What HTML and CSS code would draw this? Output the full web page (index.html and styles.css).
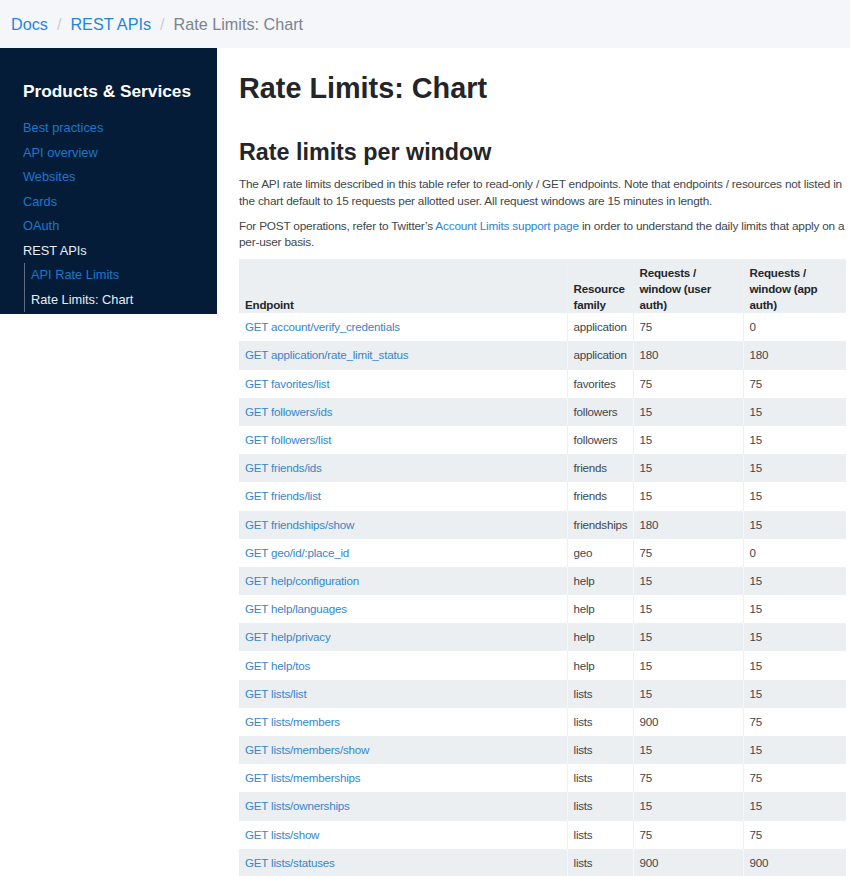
FILE: index.html
```html
<!DOCTYPE html>
<html>
<head>
<meta charset="utf-8">
<link rel="stylesheet" href="styles.css">
</head>
<body>
<nav class="crumbs">
  <a href="#">Docs</a><span class="sep">/</span><a href="#">REST APIs</a><span class="sep">/</span><span class="current">Rate Limits: Chart</span>
</nav>
<div class="layout">
  <aside class="sidebar">
    <h3 class="side-title">Products &amp; Services</h3>
    <ul class="side-list">
      <li><a href="#">Best practices</a></li>
      <li><a href="#">API overview</a></li>
      <li><a href="#">Websites</a></li>
      <li><a href="#">Cards</a></li>
      <li><a href="#">OAuth</a></li>
      <li class="active">REST APIs</li>
    </ul>
    <ul class="side-sub">
      <li><a href="#">API Rate Limits</a></li>
      <li class="active">Rate Limits: Chart</li>
    </ul>
  </aside>
  <main class="main">
    <h1 class="title">Rate Limits: Chart</h1>
    <h2 class="subtitle">Rate limits per window</h2>
    <p class="text">The API rate limits described in this table refer to read-only / GET endpoints. Note that endpoints / resources not listed in the chart default to 15 requests per allotted user. All request windows are 15 minutes in length.</p>
    <p class="text">For POST operations, refer to Twitter’s <a href="#">Account Limits support page</a> in order to understand the daily limits that apply on a per-user basis.</p>
    <table class="limits">
      <colgroup>
        <col class="c1"><col class="c2"><col class="c3"><col class="c4">
      </colgroup>
      <thead>
        <tr><th>Endpoint</th><th>Resource family</th><th>Requests / window (user auth)</th><th>Requests / window (app auth)</th></tr>
      </thead>
      <tbody>
        <tr><td><a href="#">GET account/verify_credentials</a></td><td>application</td><td>75</td><td>0</td></tr>
        <tr><td><a href="#">GET application/rate_limit_status</a></td><td>application</td><td>180</td><td>180</td></tr>
        <tr><td><a href="#">GET favorites/list</a></td><td>favorites</td><td>75</td><td>75</td></tr>
        <tr><td><a href="#">GET followers/ids</a></td><td>followers</td><td>15</td><td>15</td></tr>
        <tr><td><a href="#">GET followers/list</a></td><td>followers</td><td>15</td><td>15</td></tr>
        <tr><td><a href="#">GET friends/ids</a></td><td>friends</td><td>15</td><td>15</td></tr>
        <tr><td><a href="#">GET friends/list</a></td><td>friends</td><td>15</td><td>15</td></tr>
        <tr><td><a href="#">GET friendships/show</a></td><td>friendships</td><td>180</td><td>15</td></tr>
        <tr><td><a href="#">GET geo/id/:place_id</a></td><td>geo</td><td>75</td><td>0</td></tr>
        <tr><td><a href="#">GET help/configuration</a></td><td>help</td><td>15</td><td>15</td></tr>
        <tr><td><a href="#">GET help/languages</a></td><td>help</td><td>15</td><td>15</td></tr>
        <tr><td><a href="#">GET help/privacy</a></td><td>help</td><td>15</td><td>15</td></tr>
        <tr><td><a href="#">GET help/tos</a></td><td>help</td><td>15</td><td>15</td></tr>
        <tr><td><a href="#">GET lists/list</a></td><td>lists</td><td>15</td><td>15</td></tr>
        <tr><td><a href="#">GET lists/members</a></td><td>lists</td><td>900</td><td>75</td></tr>
        <tr><td><a href="#">GET lists/members/show</a></td><td>lists</td><td>15</td><td>15</td></tr>
        <tr><td><a href="#">GET lists/memberships</a></td><td>lists</td><td>75</td><td>75</td></tr>
        <tr><td><a href="#">GET lists/ownerships</a></td><td>lists</td><td>15</td><td>15</td></tr>
        <tr><td><a href="#">GET lists/show</a></td><td>lists</td><td>75</td><td>75</td></tr>
        <tr><td><a href="#">GET lists/statuses</a></td><td>lists</td><td>900</td><td>900</td></tr>
        <tr><td><a href="#">GET lists/subscribers</a></td><td>lists</td><td>180</td><td>15</td></tr>
      </tbody>
    </table>
  </main>
</div>
</body>
</html>
```
FILE: styles.css
```css
html, body {
  margin: 0;
  padding: 0;
  background: #ffffff;
  font-family: "Liberation Sans", Arial, Helvetica, sans-serif;
  color: #333a40;
}
a { text-decoration: none; }

.crumbs {
  height: 48px;
  box-sizing: border-box;
  padding: 0 11px;
  display: flex;
  align-items: center;
  background: #f4f6f9;
  font-size: 16.2px;
}
.crumbs a { color: #1f86d8; }
.crumbs .sep { color: #c9ced3; margin: 0 9px; }
.crumbs .current { color: #7b848c; }

.layout {
  display: flex;
  align-items: flex-start;
}

.sidebar {
  width: 217px;
  flex: none;
  box-sizing: border-box;
  background: #051c38;
  padding: 32px 0 2px 23px;
  color: #ffffff;
}
.side-title {
  margin: 0 0 14px;
  font-size: 17.3px;
  font-weight: bold;
  line-height: 22px;
  color: #ffffff;
}
.side-list, .side-sub {
  list-style: none;
  margin: 0;
  padding: 0;
  font-size: 12.8px;
}
.side-list li, .side-sub li {
  line-height: 24.5px;
}
.side-list a, .side-sub a { color: #1c78cc; }
.side-list .active, .side-sub .active { color: #e8edf2; }
.side-sub {
  margin-left: 1px;
  padding-left: 6px;
  border-left: 1px solid #5f6f82;
}

.main {
  flex: 1;
  min-width: 0;
  padding: 0 4px 0 22px;
}
.title {
  margin: 20px 0 0;
  font-size: 28.8px;
  line-height: 40px;
  font-weight: bold;
  color: #222529;
}
.subtitle {
  margin: 29px 0 0;
  font-size: 23.3px;
  line-height: 30px;
  font-weight: bold;
  color: #222529;
}
.text {
  margin: 9px 0 0;
  font-size: 11.8px;
  letter-spacing: -0.2px;
  line-height: 16.8px;
  color: #40464c;
}
.text + .text { margin-top: 8px; }
.text a { color: #2b86d0; }

.limits {
  width: 100%;
  margin-top: 8px;
  border-collapse: collapse;
  table-layout: fixed;
  font-size: 11.6px;
  letter-spacing: -0.2px;
  color: #40464c;
}
.limits .c1 { width: 328px; }
.limits .c2 { width: 66px; }
.limits .c3 { width: 110px; }
.limits .c4 { width: auto; }
.limits th {
  text-align: left;
  vertical-align: bottom;
  font-weight: bold;
  color: #22262a;
  line-height: 16px;
  padding: 6px 6px 0;
  background: #eceff2;
}
.limits td {
  padding: 6.1px 6px;
  line-height: 16px;
  white-space: nowrap;
  overflow: hidden;
}
.limits td + td, .limits th + th {
  border-left: 1px solid #eef0f3;
}
.limits tbody tr:nth-child(even) td { background: #eceff2; border-left-color: #f6f7f9; }
.limits td a { color: #3586c9; }
```
